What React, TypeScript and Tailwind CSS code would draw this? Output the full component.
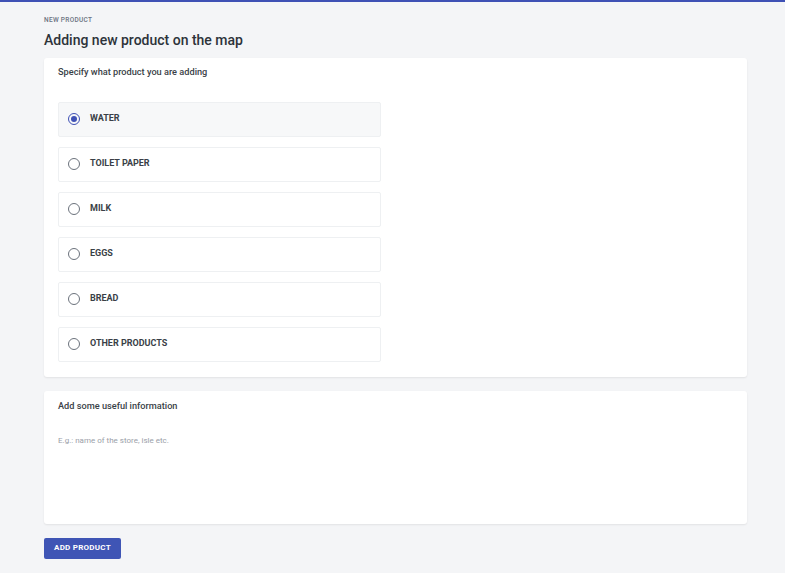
import { useState } from 'react';

const products = ['WATER', 'TOILET PAPER', 'MILK', 'EGGS', 'BREAD', 'OTHER PRODUCTS'];

function Radio({ checked }: { checked: boolean }) {
  return (
    <span
      className={`flex h-[12px] w-[12px] items-center justify-center rounded-full border-[1.5px] ${
        checked ? 'border-[#3f51b5]' : 'border-[#6b727c]'
      }`}
    >
      {checked && <span className="h-[6px] w-[6px] rounded-full bg-[#3f51b5]" />}
    </span>
  );
}

export default function App() {
  const [selected, setSelected] = useState('WATER');

  return (
    <div
      className="min-h-[573px] border-t-2 border-[#3f51b5] bg-[#f4f5f7] text-[#3a3f47]"
      style={{ fontFamily: 'Roboto, "Liberation Sans", sans-serif' }}
    >
      <div className="ml-[44px] mr-[38px] pt-[14px]">
        <p className="text-[6.5px] font-medium uppercase tracking-[0.3px] text-[#6b7280]">New product</p>
        <h1 className="mt-[4px] text-[14px] font-medium leading-[20px] text-[#2d333a]">
          Adding new product on the map
        </h1>

        <div className="mt-[8px] rounded-[3px] bg-white px-[14px] pb-[15px] pt-[8px] shadow-[0_1px_2px_rgba(0,0,0,0.08)]">
          <p className="text-[9.2px] font-medium leading-[12px]">Specify what product you are adding</p>
          <div className="mt-[24px] flex w-[323px] flex-col gap-[10px]">
            {products.map((p) => (
              <button
                key={p}
                onClick={() => setSelected(p)}
                className={`flex h-[35px] items-center gap-[10px] rounded-[2px] border border-[#eef0f2] pl-[9px] pr-[10px] text-left ${
                  selected === p ? 'bg-[#f7f8f9]' : 'bg-white'
                }`}
              >
                <Radio checked={selected === p} />
                <span className="-mt-[2px] text-[9px] font-bold leading-[12px] text-[#3a3f47]">{p}</span>
              </button>
            ))}
          </div>
        </div>

        <div className="mt-[14px] h-[133px] rounded-[3px] bg-white px-[14px] pt-[9px] shadow-[0_1px_2px_rgba(0,0,0,0.08)]">
          <p className="text-[9.2px] font-medium leading-[12px]">Add some useful information</p>
          <textarea
            placeholder="E.g.: name of the store, isle etc."
            className="mt-[24px] h-[80px] w-full resize-none text-[8px] leading-[10px] text-[#3a3f47] outline-none placeholder:text-[#9aa0a8]"
          />
        </div>

        <button className="mt-[14px] h-[21px] rounded-[2px] bg-[#3f55b5] px-[10px] text-[8px] font-bold tracking-[0.25px] text-white">
          ADD PRODUCT
        </button>
      </div>
    </div>
  );
}
